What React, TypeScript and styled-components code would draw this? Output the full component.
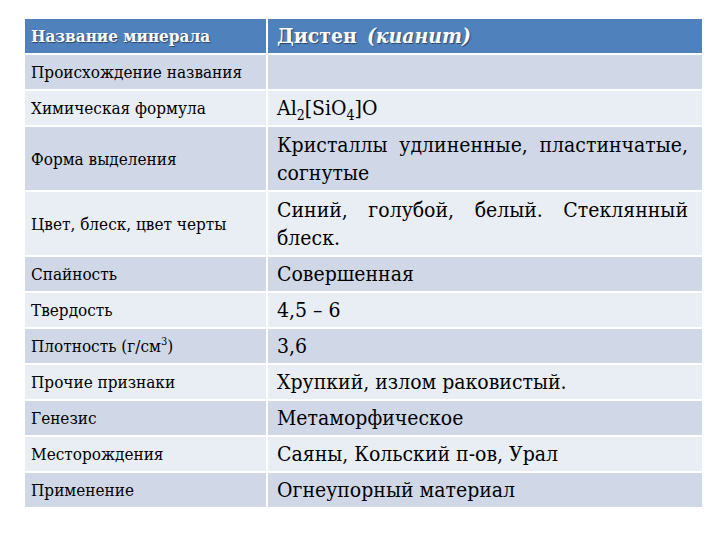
import React from "react";
import styled, { createGlobalStyle, css } from "styled-components";

const serif = css`
  font-family: "DejaVu Serif Condensed", "DejaVu Serif", "Liberation Serif", serif;
`;

const Global = createGlobalStyle`
  html, body { margin: 0; padding: 0; background: #ffffff; }
`;

const Page = styled.div`
  ${serif};
  width: 720px;
  height: 540px;
  padding: 19px 0 0 25px;
  box-sizing: border-box;
  background: #ffffff;
  color: #000000;
`;

const Table = styled.div`
  width: 677px;
  display: flex;
  flex-direction: column;
`;

type Tone = "head" | "dark" | "light";

const toneBg: Record<Tone, string> = {
  head: "#4f81bd",
  dark: "#d0d8e8",
  light: "#e9edf4",
};

const Row = styled.div<{ $tone: Tone; $tall?: boolean }>`
  display: grid;
  grid-template-columns: 243px 1fr;
  background: ${(p) => toneBg[p.$tone]};
  border-bottom: 2px solid #ffffff;
  min-height: ${(p) => (p.$tall ? 63 : 34)}px;
`;

const headText = css`
  color: #ffffff;
  font-weight: bold;
  text-shadow: 1px 1px 1px rgba(0, 0, 0, 0.45);
`;

const Label = styled.div<{ $head?: boolean }>`
  ${serif};
  display: flex;
  align-items: center;
  padding: 0 6px;
  border-right: 2px solid #ffffff;
  font-size: 17px;
  line-height: 20px;
  color: #000000;
  ${(p) => p.$head && headText}
`;

const Value = styled.div<{ $head?: boolean }>`
  ${serif};
  display: flex;
  align-items: center;
  padding: 0 14px 0 9px;
  font-size: 21px;
  line-height: 28px;
  color: #000000;
  ${(p) => p.$head && headText}
`;

const Justified = styled.span`
  ${serif};
  display: block;
  width: 100%;
  text-align: justify;
`;

const Italic = styled.i`
  ${serif};
  font-style: italic;
  margin-left: 10px;
`;

const Sub = styled.sub`
  ${serif};
  font-size: 14px;
  line-height: 0;
`;

const Sup = styled.sup`
  ${serif};
  font-size: 11px;
  line-height: 0;
`;

const Span = styled.span`
  ${serif};
`;

type Item = { label: React.ReactNode; value: React.ReactNode; tall?: boolean };

const items: Item[] = [
  { label: "Происхождение названия", value: "" },
  {
    label: "Химическая формула",
    value: (
      <Span>
        Al<Sub>2</Sub>[SiO<Sub>4</Sub>]O
      </Span>
    ),
  },
  {
    label: "Форма выделения",
    value: <Justified>Кристаллы удлиненные, пластинчатые, согнутые</Justified>,
    tall: true,
  },
  {
    label: "Цвет, блеск, цвет черты",
    value: <Justified>Синий, голубой, белый. Стеклянный блеск.</Justified>,
    tall: true,
  },
  { label: "Спайность", value: "Совершенная" },
  { label: "Твердость", value: "4,5 – 6" },
  {
    label: (
      <Span>
        Плотность (г/см<Sup>3</Sup>)
      </Span>
    ),
    value: "3,6",
  },
  { label: "Прочие признаки", value: "Хрупкий, излом раковистый." },
  { label: "Генезис", value: "Метаморфическое" },
  { label: "Месторождения", value: "Саяны, Кольский п-ов, Урал" },
  { label: "Применение", value: "Огнеупорный материал" },
];

export default function App() {
  return (
    <>
      <Global />
      <Page>
        <Table>
          <Row $tone="head">
            <Label $head>Название минерала</Label>
            <Value $head>
              Дистен<Italic>(кианит)</Italic>
            </Value>
          </Row>
          {items.map((it, i) => (
            <Row key={i} $tone={i % 2 === 0 ? "dark" : "light"} $tall={it.tall}>
              <Label>{it.label}</Label>
              <Value>{it.value}</Value>
            </Row>
          ))}
        </Table>
      </Page>
    </>
  );
}
